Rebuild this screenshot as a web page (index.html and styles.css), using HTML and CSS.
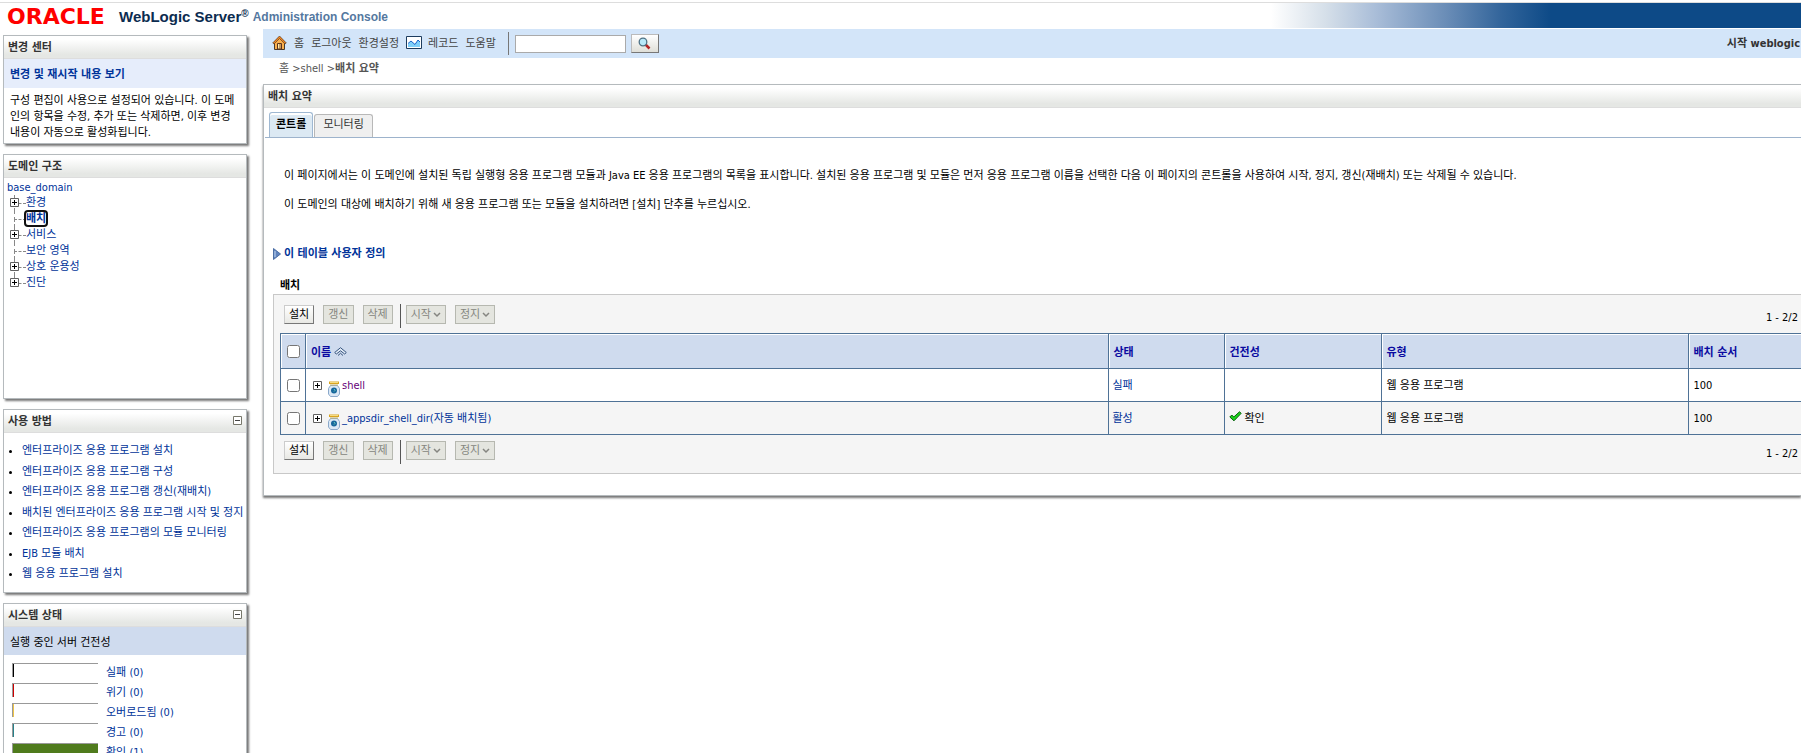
FILE: index.html
```html
<!DOCTYPE html>
<html lang="ko">
<head>
<meta charset="utf-8">
<title>배치 요약 - base_domain - WLS Console</title>
<link rel="stylesheet" href="styles.css">
</head>
<body>
<svg class="defs" width="0" height="0" aria-hidden="true">
  <symbol id="plus" viewBox="0 0 9 9"><path d="M.5.5h8v8h-8z" fill="#fff" stroke="#606060"/><path d="M2 4.500h5M4.500 2v5" stroke="#000"/></symbol>
  <symbol id="minus" viewBox="0 0 9 9"><path d="M.5.5h8v8h-8z" fill="#fff" stroke="#77776b"/><path d="M2 4.500h5" stroke="#444"/></symbol>
  <symbol id="chevron" viewBox="0 0 8 6"><path d="M1 1l3 3 3-3" fill="none" stroke="#858580" stroke-width="1.500"/></symbol>
  <symbol id="jar" viewBox="0 0 12 16">
    <path d="M2.500 4.500h7l2 3v5.500l-2 2.500h-7l-2-2.500V7.500z" fill="#dbe8f5" stroke="#8ba9cb"/>
    <path d="M1 .5h10v2.500H1z" fill="#d9a520"/><path d="M2 1.500h8" stroke="#f6dc83"/><path d="M2 4h8" stroke="#c9b36a"/>
    <circle cx="6" cy="9.500" r="3" fill="#17679c"/><path d="M6 8l1 1.500-1 1" fill="none" stroke="#6fd0bf"/>
  </symbol>
</svg>
<header class="brand">
  <span class="oracle">ORACLE</span>
  <span class="product">WebLogic Server<sup>®</sup></span>
  <span class="console">Administration Console</span>
</header>
<div class="layout">
  <aside class="side">
    <section class="panel change">
      <h2>변경 센터</h2>
      <h3><a href="#">변경 및 재시작 내용 보기</a></h3>
      <p>구성 편집이 사용으로 설정되어 있습니다. 이 도메인의 항목을 수정, 추가 또는 삭제하면, 이후 변경 내용이 자동으로 활성화됩니다.</p>
    </section>
    <section class="panel domain">
      <h2>도메인 구조</h2>
      <a class="root" href="#">base_domain</a>
      <ul class="tree">
        <li><svg class="node"><use href="#plus"/></svg><a href="#">환경</a></li>
        <li><a class="current" href="#">배치</a></li>
        <li><svg class="node"><use href="#plus"/></svg><a href="#">서비스</a></li>
        <li><a href="#">보안 영역</a></li>
        <li><svg class="node"><use href="#plus"/></svg><a href="#">상호 운용성</a></li>
        <li><svg class="node"><use href="#plus"/></svg><a href="#">진단</a></li>
      </ul>
    </section>
    <section class="panel howto">
      <h2>사용 방법 <button class="fold" aria-label="접기"><svg><use href="#minus"/></svg></button></h2>
      <ul>
        <li><a href="#">엔터프라이즈 응용 프로그램 설치</a></li>
        <li><a href="#">엔터프라이즈 응용 프로그램 구성</a></li>
        <li><a href="#">엔터프라이즈 응용 프로그램 갱신(재배치)</a></li>
        <li><a href="#">배치된 엔터프라이즈 응용 프로그램 시작 및 정지</a></li>
        <li><a href="#">엔터프라이즈 응용 프로그램의 모듈 모니터링</a></li>
        <li><a href="#">EJB 모듈 배치</a></li>
        <li><a href="#">웹 응용 프로그램 설치</a></li>
      </ul>
    </section>
    <section class="panel status">
      <h2>시스템 상태 <button class="fold" aria-label="접기"><svg><use href="#minus"/></svg></button></h2>
      <h3>실행 중인 서버 건전성</h3>
      <ul>
        <li><span class="bar failed"></span><a href="#">실패 (0)</a></li>
        <li><span class="bar critical"></span><a href="#">위기 (0)</a></li>
        <li><span class="bar overloaded"></span><a href="#">오버로드됨 (0)</a></li>
        <li><span class="bar warning"></span><a href="#">경고 (0)</a></li>
        <li><span class="bar ok"></span><a href="#">확인 (1)</a></li>
      </ul>
    </section>
  </aside>
  <main class="main">
    <nav class="toolbar">
      <a class="home" href="#"><svg class="home-icon" viewBox="0 0 15 15"><path d="M2.500 7v7.500h10V7L7.500 2z" fill="#fbb04c" stroke="#4a3a2a"/><path d="M.7 8L7.500 1 14.300 8 13 8.900 7.500 3.500 2 8.900z" fill="#ff8a1e" stroke="#4a3a2a" stroke-width=".7"/><path d="M5.500 14V8.500h4V14z" fill="#ffe9a0" stroke="#5c3420"/><path d="M8 9v5" stroke="#8a4b20"/></svg>홈</a>
      <a href="#">로그아웃</a>
      <a href="#">환경설정</a>
      <a class="record" href="#"><svg class="record-icon" viewBox="0 0 16 13"><path d="M.5.5h15v12H.5z" fill="#fff" stroke="#1d3c5e"/><path d="M2 8l3-3 4 3.500 3-4.500 2 2v5H2z" fill="#7fd0fa"/><path d="M2 7.500l3-2.500 4 3.500 3-4.500 2 2" fill="none" stroke="#1764cc"/></svg>레코드</a>
      <a href="#">도움말</a>
      <form class="search">
        <input type="text" aria-label="검색">
        <button type="button" aria-label="검색"><svg viewBox="0 0 13 13"><path d="M7.500 7.500l4 4" stroke="#b32525" stroke-width="2.500"/><circle cx="5" cy="5" r="3.800" fill="#b8e9fa" stroke="#4e7184" stroke-width="1.300"/></svg></button>
      </form>
      <span class="user">시작 weblogic</span>
    </nav>
    <nav class="crumbs"><a href="#">홈</a> &gt;<a href="#">shell</a> &gt;<b>배치 요약</b></nav>
    <section class="content">
      <h1>배치 요약</h1>
      <div class="tabs"><a class="tab active" href="#">콘트롤</a><a class="tab" href="#">모니터링</a></div>
      <div class="intro">
        <p>이 페이지에서는 이 도메인에 설치된 독립 실행형 응용 프로그램 모듈과 Java EE 응용 프로그램의 목록을 표시합니다. 설치된 응용 프로그램 및 모듈은 먼저 응용 프로그램 이름을 선택한 다음 이 페이지의 콘트롤을 사용하여 시작, 정지, 갱신(재배치) 또는 삭제될 수 있습니다.</p>
        <p>이 도메인의 대상에 배치하기 위해 새 응용 프로그램 또는 모듈을 설치하려면 [설치] 단추를 누르십시오.</p>
      </div>
      <a class="customize" href="#"><svg viewBox="0 0 8 12"><path d="M.5.5l7 5.500-7 5.500z" fill="#5f83bd" stroke="#4c6ea5"/><path d="M2 3v6" stroke="#c5d8f2"/></svg>이 테이블 사용자 정의</a>
      <h2 class="caption" id="cap">배치</h2>
      <div class="grid">
        <div class="actions">
          <button>설치</button><button disabled>갱신</button><button disabled>삭제</button>
          <span class="menus"><button disabled>시작<svg><use href="#chevron"/></svg></button><button disabled>정지<svg><use href="#chevron"/></svg></button></span>
          <span class="count">1 - 2/2</span>
        </div>
        <table aria-labelledby="cap">
          <thead>
            <tr><th class="pick"><input type="checkbox" aria-label="모두 선택"></th><th><a href="#">이름</a><svg class="sort" viewBox="0 0 13 9"><path d="M.7 5.500L6.500.7l5.800 4.800-1.600 1.500L6.500 3.800 2.300 7z" fill="#e4edf8" stroke="#34537d"/><path d="M4 8.500l2.500-2.200L9 8.500" fill="none" stroke="#34537d"/></svg></th><th class="state"><a href="#">상태</a></th><th class="health"><a href="#">건전성</a></th><th class="type"><a href="#">유형</a></th><th class="order"><a href="#">배치 순서</a></th></tr>
          </thead>
          <tbody>
            <tr><td class="pick"><input type="checkbox" aria-label="shell"></td><td><div class="name"><svg class="node"><use href="#plus"/></svg><svg class="jar"><use href="#jar"/></svg><a class="visited" href="#">shell</a></div></td><td><a href="#">실패</a></td><td></td><td>웹 응용 프로그램</td><td>100</td></tr>
            <tr><td class="pick"><input type="checkbox" aria-label="_appsdir_shell_dir"></td><td><div class="name"><svg class="node"><use href="#plus"/></svg><svg class="jar"><use href="#jar"/></svg><a href="#">_appsdir_shell_dir(자동 배치됨)</a></div></td><td><a href="#">활성</a></td><td><svg class="check" viewBox="0 0 13 11"><path d="M.8 6l2-2 2 2L10.500.8l1.700 1.500L5 9.800z" fill="#1bd21b" stroke="#08620d"/></svg>확인</td><td>웹 응용 프로그램</td><td>100</td></tr>
          </tbody>
        </table>
        <div class="actions">
          <button>설치</button><button disabled>갱신</button><button disabled>삭제</button>
          <span class="menus"><button disabled>시작<svg><use href="#chevron"/></svg></button><button disabled>정지<svg><use href="#chevron"/></svg></button></span>
          <span class="count">1 - 2/2</span>
        </div>
      </div>
    </section>
  </main>
</div>
</body>
</html>
```
FILE: styles.css
```css
* { box-sizing: border-box; }
body { margin: 0; padding-top: 2px; overflow: hidden; background: #fff; color: #000; font: 11px/16px "DejaVu Sans Condensed", "Noto Sans CJK KR", sans-serif; }
h1, h2, h3, p, ul { margin: 0; padding: 0; font-size: 11px; }
ul { list-style: none; }
a { color: #003399; text-decoration: none; }
button, input { font: inherit; margin: 0; }
svg { flex: none; }
.defs { position: absolute; }

.brand { display: flex; align-items: center; height: 27px; padding: 2px 0 0 7px; border-top: 1px solid #ddd; border-bottom: 1px solid #fff; white-space: nowrap; font-family: "Liberation Sans", sans-serif; font-weight: bold; background: linear-gradient(to right, #fff calc(100% - 530px), #d5dfe9 calc(100% - 475px), #a9bdd8 calc(100% - 425px), #6a8db7 calc(100% - 355px), #33659b calc(100% - 300px), #0d4a87 calc(100% - 250px)); }
.oracle { width: 112px; color: #f00; font: bold 22px/24px "DejaVu Sans", sans-serif; }
.product { margin-right: 4px; color: #0c2c50; font-size: 15px; line-height: 24px; }
.product sup { font-size: 10px; line-height: 8px; vertical-align: 5px; }
.console { color: #54789f; font-size: 12px; line-height: 24px; }

.layout { display: flex; gap: 16px; }
.side { display: flex; flex-direction: column; gap: 10px; flex: none; width: 247px; padding: 6px 0 0 3px; }
.panel { border: 1px solid #b5babd; box-shadow: 2px 2px 2px #777; }
.panel h2, .content h1 { display: flex; justify-content: space-between; align-items: center; height: 23px; padding: 2px 4px 0; border-bottom: 1px solid #ddd; background: linear-gradient(#fff 15%, #e5e7e4 85%); color: #333; font-weight: bold; }
.fold { display: flex; padding: 0 0 4px; border: 0; background: none; }
.fold svg { width: 9px; height: 9px; }
.change h3 { height: 29px; padding: 8px 6px 0; background: #e6edfb; }
.change p { padding: 5px 6px 2px; word-break: break-all; }
.domain { min-height: 245px; }
.root { display: block; height: 17px; padding: 2px 0 0 3px; }
.tree { margin-left: 10px; }
.tree li { position: relative; height: 16px; padding-left: 12px; line-height: 16px; }
.tree li::before { content: ""; position: absolute; left: 0; top: 0; width: 11px; height: 8px; border: dashed #888; border-width: 0 0 1px 1px; }
.tree li:not(:last-child)::after { content: ""; position: absolute; left: 0; top: 8px; height: 8px; border-left: 1px dashed #888; }
.node { width: 9px; height: 9px; }
.tree .node { position: absolute; z-index: 1; left: -4px; top: 3px; }
.current { position: relative; z-index: 1; border-radius: 2px; outline: 2px solid #101010; background: #fff; font-weight: bold; }
.howto { min-height: 184px; }
.howto ul { display: grid; align-content: space-between; min-height: 149px; padding: 10px 0 0 18px; list-style: disc; white-space: nowrap; }
.status h3 { height: 28px; padding: 8px 6px 0; background: #cfdbee; font-weight: normal; }
.status ul { padding: 7px 8px; }
.status li { display: flex; align-items: flex-start; gap: 8px; height: 20px; }
.status a { padding-top: 3px; }
.bar { width: 86px; height: 14px; margin-top: 1px; border: solid #999; border-width: 1px 0 0 1px; }
.failed { box-shadow: inset 1px 0 #000; }
.critical { box-shadow: inset 1px 0 #c00; }
.overloaded { box-shadow: inset 1px 0 #eec346; }
.warning { box-shadow: inset 1px 0 #26818a; }
.ok { background: #4f7b1d; }

.main { flex: 1; min-width: 0; }
.toolbar { display: flex; align-items: center; height: 29px; padding-left: 9px; gap: 7px; background: #d3e5f9; white-space: nowrap; }
.toolbar a { display: flex; align-items: center; gap: 7px; color: #444; }
.toolbar .record { gap: 6px; }
.toolbar .home-icon, .toolbar .record-icon { margin-bottom: 3px; }
.home-icon { width: 15px; height: 15px; }
.record-icon { width: 16px; height: 13px; }
.search { display: flex; align-items: center; gap: 5px; height: 23px; margin-left: 5px; padding-left: 6px; border-left: 1px solid #777; }
.search input { width: 111px; height: 18px; padding: 0 2px; border: 1px solid #aaa; background: #fff; }
.search button { display: flex; align-items: center; justify-content: center; width: 28px; height: 19px; padding: 0; border: 1px solid #bbb; border-right-color: #777; border-bottom-color: #777; background: linear-gradient(#fff, #dfdfd8); }
.search svg { width: 13px; height: 13px; }
.user { margin-left: auto; padding-right: 1px; color: #333; font-weight: bold; }
.crumbs { height: 26px; padding: 3px 0 0 16px; color: #555; }
.crumbs a { color: #555; }
.content { padding-bottom: 21px; border: solid #b5babd; border-width: 1px 0 1px 1px; box-shadow: 0 2px 2px #777; }
.tabs { display: flex; align-items: flex-end; gap: 1px; height: 30px; margin-left: 1px; padding-left: 4px; border-bottom: 1px solid #9db3cc; }
.tab { height: 23px; padding: 2px 8px 0; border: 1px solid #b8b8b8; border-bottom: 0; border-radius: 3px 3px 0 0; background: #efefef; color: #333; }
.tab.active { height: 25px; padding: 4px 6px 0; border-color: #9fb8d2; background: #dce9f3; box-shadow: inset 0 2px #fff; color: #000; font-weight: bold; }
.intro { display: grid; gap: 13px; padding: 30px 20px 0; }
.customize { display: flex; align-items: center; gap: 3px; margin: 33px 0 0 9px; font-weight: bold; }
.customize svg { width: 8px; height: 12px; }
.caption { margin: 16px 0 0 16px; font-weight: bold; }
.grid { margin-left: 9px; padding-left: 6px; border: 1px solid #c8c8c8; border-right: 0; background: #f5f5f5; }
.actions { display: flex; align-items: flex-start; gap: 9px; height: 38px; padding: 10px 3px 0 4px; }
.actions button { display: flex; align-items: center; gap: 2px; height: 19px; padding: 1px 4px 0; border: 1px solid #ccc; border-right-color: #777; border-bottom-color: #777; background: linear-gradient(#fff, #e8e8e4); color: #000; line-height: 16px; white-space: nowrap; }
.actions button:disabled { border-color: #b6b8b0; background: #e4e5df; color: #858580; }
.actions svg { width: 8px; height: 6px; }
.menus { display: flex; gap: 9px; height: 24px; margin: -1px 0 0 -2px; padding: 1px 0 0 5px; border-left: 1px solid #555; }
.count { margin: 5px 0 0 auto; }
table { width: 100%; table-layout: fixed; border-collapse: collapse; }
th, td { padding: 2px 5px 0; border: 1px solid #4f7296; border-right: 0; text-align: left; }
th { height: 35px; padding-top: 3px; background: #cfdbee; box-shadow: inset 1px 1px #fff; }
th a { color: #0a0aa0; }
td { height: 33px; background: #fff; }
td:nth-child(3), td:nth-child(4) { padding-left: 4px; }
tbody tr:nth-child(2) td { background: #f5f5f5; }
.pick { width: 25px; padding: 0; text-align: center; }
.pick input { display: block; width: 13px; height: 13px; margin: 0 auto; }
.state { width: 116px; }
.health { width: 157px; }
.type { width: 307px; }
.order { width: 113px; }
.sort { width: 13px; height: 9px; margin-left: 3px; }
.name { display: flex; align-items: center; padding-left: 2px; }
.name .node { margin-bottom: 2px; }
.visited { color: #660077; }
.jar { width: 12px; height: 16px; margin: 6px 2px 0 6px; }
.check { width: 13px; height: 11px; margin-right: 3px; }
.grid table + .actions { padding-top: 6px; }
```
